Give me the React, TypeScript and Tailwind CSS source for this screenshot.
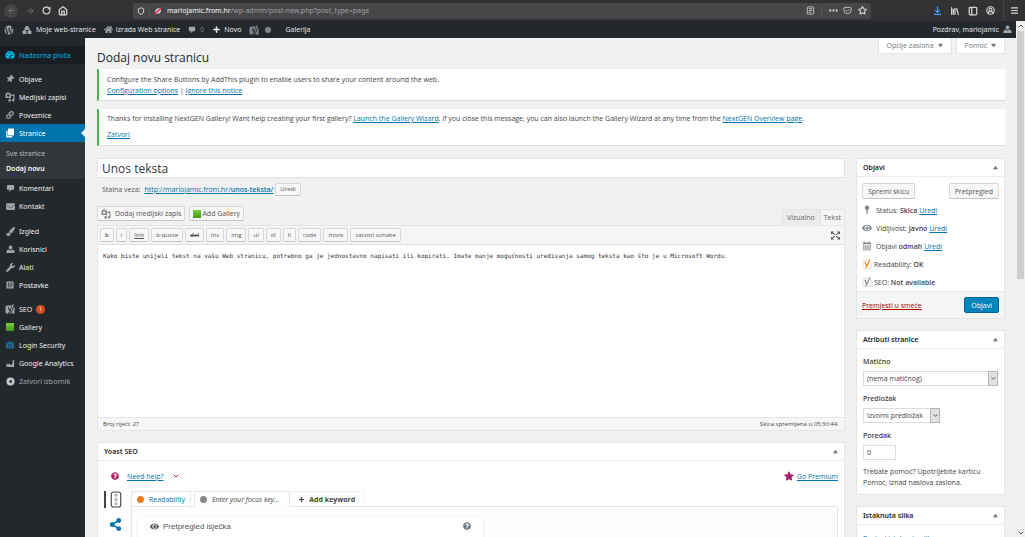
import type { ReactNode } from "react";
import {
  ArrowLeft,
  ArrowRight,
  ChevronDown,
  ChevronUp,
  CircleUserRound,
  Ellipsis,
  House,
  Library,
  Menu,
  PanelLeft,
  Plus,
  RotateCw,
  Shield,
  Star,
} from "lucide-react";
import {
  FaCamera,
  FaEnvelope,
  FaEye,
  FaHome,
  FaLink,
  FaPaintBrush,
  FaQuestionCircle,
  FaShareAlt,
  FaStar,
  FaThumbtack,
  FaWordpress,
  FaWrench,
} from "react-icons/fa";

interface SvgProps {
  className?: string;
}

const NetworkIcon = ({ className }: SvgProps) => (
  <svg viewBox="0 0 20 20" fill="currentColor" className={className}>
    <path d="M10 1l6 5.500h-1.600V10H5.600V6.500H4z M5 9l5 4.500H8.800V18H1.200v-4.500H0z M15 9l5 4.500h-1.200V18h-7.600v-4.500H10z" />
  </svg>
);

const CommentIcon = ({ className }: SvgProps) => (
  <svg viewBox="0 0 20 20" fill="currentColor" className={className}>
    <path d="M4 2h12a2 2 0 0 1 2 2v7a2 2 0 0 1-2 2h-4l-5 5v-5H4a2 2 0 0 1-2-2V4a2 2 0 0 1 2-2z" />
  </svg>
);

const UserIcon = ({ className }: SvgProps) => (
  <svg viewBox="0 0 20 20" fill="currentColor" className={className}>
    <path d="M10 1a4 4 0 0 1 4 4.500C14 8 12.200 10 10 10S6 8 6 5.500A4 4 0 0 1 10 1z" />
    <path d="M6 10l4 3 4-3c3 .5 5 2.500 5 5.500V18H1v-2.500C1 12.500 3 10.500 6 10z" />
  </svg>
);

const DownloadIcon = ({ className }: SvgProps) => (
  <svg viewBox="0 0 20 20" fill="none" stroke="currentColor" strokeWidth="2.600" className={className}>
    <path d="M10 1v13M4.500 9l5.500 5.500L15.500 9M2 18.500h16" />
  </svg>
);

const DashboardIcon = ({ className }: SvgProps) => (
  <svg viewBox="0 0 20 20" className={className}>
    <path
      fill="currentColor"
      d="M10 2a9 9 0 0 0-8 13.500c.5.900 1 1.500 1.500 1.500h13c.5 0 1-.6 1.500-1.500A9 9 0 0 0 10 2z"
    />
    <g fill="#191e23">
      <circle cx="4.500" cy="11" r="1.200" />
      <circle cx="6.500" cy="6.500" r="1.200" />
      <circle cx="10" cy="5" r="1.200" />
      <circle cx="15.500" cy="11" r="1.200" />
      <path d="M14 6l-2.500 8a1.600 1.600 0 1 1-2.600-1.200z" />
    </g>
  </svg>
);

const MediaIcon = ({ className }: SvgProps) => (
  <svg viewBox="0 0 20 20" className={className}>
    <path
      fill="currentColor"
      fillRule="evenodd"
      d="M1 3h2l1-2h4l1 2h3v9H1zM6.500 4.700a2.500 2.500 0 1 0 0 5 2.500 2.500 0 0 0 0-5z"
    />
    <path
      fill="currentColor"
      d="M13 5h6v11.500a2.600 2.600 0 1 1-2.200-2.500V8H13zM9.500 13h2.200v4a2.600 2.600 0 1 1-2.200-2.500z"
    />
  </svg>
);

const PagesIcon = ({ className }: SvgProps) => (
  <svg viewBox="0 0 20 20" fill="currentColor" className={className}>
    <path d="M7 1h10a1 1 0 0 1 1 1v12a1 1 0 0 1-1 1H7a1 1 0 0 1-1-1V2a1 1 0 0 1 1-1z" />
    <path d="M2.500 5H5v11h9.500v3h-11a1 1 0 0 1-1-1z" />
  </svg>
);

const SettingsIcon = ({ className }: SvgProps) => (
  <svg viewBox="0 0 20 20" className={className}>
    <rect x="1" y="1" width="18" height="18" rx="1" fill="currentColor" />
    <path
      d="M6 4v12M4 8h4M10 4v12M8.500 12h3M14.500 4v12M12.500 7h4"
      stroke="#23282d"
      strokeWidth="1.500"
    />
  </svg>
);

const YoastIcon = ({ className }: SvgProps) => (
  <svg viewBox="0 0 20 20" className={className}>
    <path fill="currentColor" d="M4 3h9.500L10 12 8 6.500H5.500L9 15c-.5 1.500-1 2-2.500 2v2H4a3 3 0 0 1-3-3V6a3 3 0 0 1 3-3z" />
    <path fill="currentColor" d="M14.800 1h3L11 19H7.500c2-.5 2.500-1 3-2.500zM18 5c.7.600 1 1.300 1 2.200V19h-6z" />
  </svg>
);

// outlined variant used in the publish box
const YoastBadge = ({ className }: SvgProps) => (
  <svg viewBox="0 0 20 20" fill="none" stroke="currentColor" className={className}>
    <path d="M13 3H3.500A1.500 1.500 0 0 0 2 4.500v12A2.500 2.500 0 0 0 4.500 19H18V6" strokeWidth="1" opacity="0.600" />
    <path d="M5.500 6l4 7.500M16 1l-6 13c-1 2-1.500 2.800-3.500 2.800" strokeWidth="2.400" />
  </svg>
);

const ChartIcon = ({ className }: SvgProps) => (
  <svg viewBox="0 0 20 20" fill="currentColor" className={className}>
    <path d="M1 18V9l3 3 3-2 3 3 3-1 2-5V2h3v16z" />
  </svg>
);

const CollapseIcon = ({ className }: SvgProps) => (
  <svg viewBox="0 0 20 20" className={className}>
    <circle cx="10" cy="10" r="9" fill="currentColor" />
    <path d="M12.500 5.500v9L6 10z" fill="#23282d" />
  </svg>
);

const PocketIcon = ({ className }: SvgProps) => (
  <svg viewBox="0 0 20 20" fill="none" stroke="currentColor" strokeWidth="1.800" className={className}>
    <path d="M3.500 3h13A1.500 1.500 0 0 1 18 4.500V9A8 8 0 0 1 2 9V4.500A1.500 1.500 0 0 1 3.500 3z" />
    <path d="M6 8l4 4 4-4" />
  </svg>
);

const ReaderIcon = ({ className }: SvgProps) => (
  <svg viewBox="0 0 20 20" fill="none" stroke="currentColor" strokeWidth="1.800" className={className}>
    <rect x="3" y="2" width="14" height="16" rx="2" />
    <path d="M6 6h8M6 10h8M6 14h5" />
  </svg>
);

const PermissionIcon = ({ className }: SvgProps) => (
  <svg viewBox="0 0 20 20" className={className}>
    <path d="M3 9l6-6h8v9l-5 5H3z" fill="#d7d7db" />
    <path d="M2 18L18 2" stroke="#e22850" strokeWidth="4" />
  </svg>
);

const PinIcon = ({ className }: SvgProps) => (
  <svg viewBox="0 0 20 20" fill="currentColor" className={className}>
    <path d="M10 1a4.500 4.500 0 0 1 1.500 8.700L11 19H9l-.5-9.300A4.500 4.500 0 0 1 10 1z" />
  </svg>
);

const CalendarIcon = ({ className }: SvgProps) => (
  <svg viewBox="0 0 20 20" fill="none" stroke="currentColor" className={className}>
    <path d="M2 4.500h16" strokeWidth="3" />
    <path d="M5.500 1v3M14.500 1v3" strokeWidth="2" />
    <path d="M2.700 5v13.300h14.600V5M6.300 7v11M10 7v11M13.700 7v11M2.700 10h14.600M2.700 14h14.600" strokeWidth="1.200" />
  </svg>
);

const ExpandIcon = ({ className }: SvgProps) => (
  <svg viewBox="0 0 20 20" className={className}>
    <path d="M3 4l5.500 4.500M17 4l-5.500 4.500M3 16l5.500-4.500M17 16l-5.500-4.500" stroke="currentColor" strokeWidth="2.400" />
    <path
      fill="currentColor"
      d="M0 1h7L0 7.500zM20 1h-7l7 6.500zM0 19h7l-7-6.500zM20 19h-7l7-6.500z"
    />
  </svg>
);

const TrafficIcon = ({ className }: SvgProps) => (
  <svg viewBox="0 0 12 18" className={className}>
    <rect x="1" y="1" width="10" height="16" rx="2.500" fill="#fff" stroke="#4b4450" strokeWidth="1.200" />
    <g fill="#b8b8b8">
      <circle cx="6" cy="4.500" r="1.800" />
      <circle cx="6" cy="9" r="1.800" />
      <circle cx="6" cy="13.500" r="1.800" />
    </g>
  </svg>
);

const GreenSquare = () => <span className="h-2 w-2 bg-gradient-to-b from-[#7ad03a] to-[#3c9a10]" />;

interface ButtonProps {
  children: ReactNode;
  className?: string;
}

const Button = ({ children, className = "" }: ButtonProps) => (
  <button
    type="button"
    className={`flex items-center justify-center rounded-xs border border-[#d6d6d6] border-b-[#c4c4c4] bg-[#f7f7f7] text-[#555] ${className}`}
  >
    {children}
  </button>
);

const Link = ({ children }: { children: ReactNode }) => (
  <a href="#" className="text-[#0073aa] underline">
    {children}
  </a>
);

const BrowserBar = () => (
  <div className="flex h-[21px] shrink-0 items-center bg-[#323234] font-['Noto_Sans',sans-serif] text-[#d7d7db]">
    <div className="flex w-[133px] shrink-0 items-center gap-[7px] pl-1">
      <button type="button" aria-label="Back" className="flex h-3.5 w-3.5 items-center justify-center rounded-full bg-[#444446] text-[#828284]">
        <ArrowLeft size={9} />
      </button>
      <button type="button" aria-label="Forward" className="text-[#77777a]">
        <ArrowRight size={10} />
      </button>
      <button type="button" aria-label="Reload">
        <RotateCw size={9} strokeWidth={3} />
      </button>
      <button type="button" aria-label="Home">
        <House size={10} strokeWidth={3} />
      </button>
    </div>
    <div className="flex h-4 grow items-center rounded-xs bg-[#474749] px-1">
      <Shield size={8} strokeWidth={3} className="mr-1" />
      <span className="mr-1 h-3 w-px bg-[#59595b]" />
      <PermissionIcon className="mr-[5px] h-2 w-2" />
      <div className="grow text-[7px] leading-4 text-[#a0a0a3]">
        <span className="text-[#f9f9fa]">mariojamic.from.hr</span>/wp-admin/post-new.php?post_type=page
      </div>
      <ReaderIcon className="mr-1.5 h-[9px] w-[9px]" />
      <span className="mr-1.5 h-3 w-px bg-[#59595b]" />
      <Ellipsis size={11} strokeWidth={3} className="mr-1" />
      <PocketIcon className="mr-1.5 h-[9px] w-[9px]" />
      <Star size={9} strokeWidth={3} />
    </div>
    <div className="flex w-[154px] shrink-0 items-center justify-end gap-2">
      <DownloadIcon className="h-[9px] w-[9px] text-[#45a1ff]" />
      <Library size={10} strokeWidth={3} />
      <PanelLeft size={10} strokeWidth={3} />
      <CircleUserRound size={9} strokeWidth={3} />
      <div className="flex h-[21px] items-center border-l border-[#444446] pr-1.5 pl-1.5">
        <Menu size={9} strokeWidth={3} />
      </div>
    </div>
  </div>
);

const AdminBar = () => (
  <div className="flex h-[17px] shrink-0 items-center bg-[#23282d] pr-1 pl-1 text-[7px] text-[#eee]">
    <FaWordpress size={10} className="mr-2 text-[#a0a5aa]" />
    <NetworkIcon className="mr-1 h-2.5 w-2.5 text-[#a0a5aa]" />
    <a href="#" className="mr-2">Moje web-stranice</a>
    <FaHome size={9} className="mr-[3px] text-[#a0a5aa]" />
    <a href="#" className="mr-2">Izrada Web stranice</a>
    <CommentIcon className="mr-1 h-2 w-2 text-[#a0a5aa]" />
    <span className="mr-2 text-[#82878c]">0</span>
    <Plus size={9} strokeWidth={4} className="mr-[3px]" />
    <a href="#" className="mr-2">Novo</a>
    <YoastIcon className="mr-1.5 h-2.5 w-2.5 text-[#82878c]" />
    <span className="mr-3.5 h-1.5 w-1.5 rounded-full bg-[#82878c]" />
    <a href="#" className="grow">Galerija</a>
    <a href="#" className="mr-1">Pozdrav, mariojamic</a>
    <UserIcon className="h-[9px] w-[9px] text-[#a0a5aa]" />
  </div>
);

interface MenuItemProps {
  icon: ReactNode;
  label: string;
  badge?: string;
  tone?: "normal" | "hover" | "current" | "muted";
}

const itemTones = {
  normal: "text-[#eee]",
  hover: "bg-[#191e23] text-[#00b9eb]",
  current: "bg-[#0073aa] text-white",
  muted: "text-[#a0a5aa]",
};

const iconTones = {
  normal: "text-[#a0a5aa]",
  hover: "text-[#00b9eb]",
  current: "text-white",
  muted: "text-[#c5c8ca]",
};

const MenuItem = ({ icon, label, badge, tone = "normal" }: MenuItemProps) => (
  <li>
    <a href="#" className={`flex h-[18px] items-center pl-[5px] ${itemTones[tone]}`}>
      <span className={`mr-1 flex w-2.5 justify-center ${iconTones[tone]}`}>{icon}</span>
      {label}
      {badge && (
        <span className="ml-1 flex h-[9px] w-[9px] items-center justify-center rounded-full bg-[#d54e21] text-[5px] text-white">
          {badge}
        </span>
      )}
      {tone === "current" && (
        <span className="ml-auto border-y-4 border-r-4 border-y-transparent border-r-[#f1f1f1]" />
      )}
    </a>
  </li>
);

const Sidebar = () => (
  <nav className="w-[85px] shrink-0 bg-[#23282d] pt-2 font-['Noto_Sans',sans-serif] text-[7px]">
    <ul>
      <MenuItem icon={<DashboardIcon className="h-2.5 w-2.5" />} label="Nadzorna ploča" tone="hover" />
    </ul>
    <ul className="mt-1.5">
      <MenuItem icon={<FaThumbtack size={8} className="rotate-45" />} label="Objave" />
      <MenuItem icon={<MediaIcon className="h-2.5 w-2.5" />} label="Medijski zapisi" />
      <MenuItem icon={<FaLink size={8} />} label="Poveznice" />
      <MenuItem icon={<PagesIcon className="h-2.5 w-2.5" />} label="Stranice" tone="current" />
      <li>
        <ul className="bg-[#32373c] pt-1 pb-[3px] pl-1.5 leading-[15px]">
          <li><a href="#" className="text-[#b4b9be]">Sve stranice</a></li>
          <li><a href="#" className="font-semibold text-white">Dodaj novu</a></li>
        </ul>
      </li>
      <MenuItem icon={<CommentIcon className="h-[9px] w-[9px]" />} label="Komentari" />
      <MenuItem icon={<FaEnvelope size={9} />} label="Kontakt" />
    </ul>
    <ul className="mt-[7px]">
      <MenuItem icon={<FaPaintBrush size={9} />} label="Izgled" />
      <MenuItem icon={<UserIcon className="h-[9px] w-[9px]" />} label="Korisnici" />
      <MenuItem icon={<FaWrench size={9} />} label="Alati" />
      <MenuItem icon={<SettingsIcon className="h-2 w-2" />} label="Postavke" />
    </ul>
    <ul className="mt-1.5">
      <MenuItem icon={<YoastIcon className="h-2.5 w-2.5" />} label="SEO" badge="1" />
      <MenuItem icon={<GreenSquare />} label="Gallery" />
      <MenuItem icon={<FaCamera size={8} className="text-[#1c6a94]" />} label="Login Security" />
      <MenuItem icon={<ChartIcon className="h-[9px] w-[9px]" />} label="Google Analytics" />
      <MenuItem icon={<CollapseIcon className="h-[9px] w-[9px]" />} label="Zatvori izbornik" tone="muted" />
    </ul>
  </nav>
);

const Notice = ({ children }: { children: ReactNode }) => (
  <div className="mb-2 border-b border-l-2 border-b-[#dcdcdc] border-l-[#46b450] bg-white px-2">
    {children}
  </div>
);

const quickTags = [
  { label: "b", style: "font-semibold" },
  { label: "i", style: "italic" },
  { label: "link", style: "underline" },
  { label: "b-quote", style: "" },
  { label: "del", style: "line-through font-semibold" },
  { label: "ins", style: "" },
  { label: "img", style: "" },
  { label: "ul", style: "" },
  { label: "ol", style: "" },
  { label: "li", style: "" },
  { label: "code", style: "" },
  { label: "more", style: "" },
  { label: "zatvori oznake", style: "" },
];

const content =
  "Kako biste unijeli tekst na vašu Web stranicu, potrebno ga je jednostavno napisati ili kopirati. Imate manje mogućnosti uređivanja samog teksta kao što je u Microsoft Wordu.";

const Editor = () => (
  <section>
    <input
      aria-label="Naslov"
      defaultValue="Unos teksta"
      className="block h-5 w-full border border-[#e2e2e2] bg-white px-1 text-[12px] text-[#32373c]"
    />
    <div className="mt-1 flex h-[14px] items-center pl-[5px]">
      <span className="mr-1 text-[#555]">Stalna veza:</span>
      <a href="#" className="mr-0.5 text-[#0073aa] underline">
        http://mariojamic.from.hr/<span className="font-semibold">unos-teksta/</span>
      </a>
      <Button className="h-[13px] px-1 text-[6px]">Uredi</Button>
    </div>
    <div className="mt-2.5 flex items-start justify-between">
      <div className="mb-1 flex gap-1">
        <Button className="h-[15px] gap-1 px-[3px]">
          <MediaIcon className="h-2.5 w-2.5 text-[#82878c]" />
          Dodaj medijski zapis
        </Button>
        <Button className="h-[15px] gap-px px-[3px]">
          <GreenSquare />
          Add Gallery
        </Button>
      </div>
      <div className="mt-[3px] flex text-[#666]">
        <button type="button" className="h-4 border border-b-0 border-[#e5e5e5] bg-[#ebebeb] px-1">Vizualno</button>
        <button type="button" className="h-4 border border-b-0 border-[#e5e5e5] bg-[#f5f5f5] px-[3px]">Tekst</button>
      </div>
    </div>
    <div className="border border-[#e5e5e5]">
      <div className="flex h-[19px] items-center gap-0.5 border-b border-[#dedede] bg-[#f5f5f5] px-0.5">
        {quickTags.map((tag) => (
          <Button key={tag.label} className={`h-3.5 px-1 text-[6px] ${tag.style}`}>
            {tag.label}
          </Button>
        ))}
        <button type="button" aria-label="Cijeli zaslon" className="mr-0.5 ml-auto text-[#555]">
          <ExpandIcon className="h-[9px] w-[9px]" />
        </button>
      </div>
      <textarea
        aria-label="Sadržaj"
        defaultValue={content}
        className="block h-[172px] w-full resize-none bg-white px-[5px] py-1.5 font-['DejaVu_Sans_Mono',monospace] text-[6px] leading-[9px] text-[#333]"
      />
      <div className="flex h-[13px] items-center justify-between border-t border-[#e5e5e5] bg-[#f7f7f7] px-[5px] text-[6px]">
        <span>Broj riječi: 27</span>
        <span>Skica spremljena u 05:36:44.</span>
      </div>
    </div>
  </section>
);

interface BoxProps {
  title: string;
  children: ReactNode;
}

const Box = ({ title, children }: BoxProps) => (
  <section className="border border-[#e5e5e5] bg-white">
    <div className="flex h-[18px] items-center justify-between border-b border-[#eee] px-1.5">
      <h2 className="font-['Noto_Sans',sans-serif] text-[7px] font-semibold text-[#23282d]">{title}</h2>
      <button type="button" aria-label={`Sažmi: ${title}`} className="flex">
        <svg viewBox="0 0 6 6" className="h-[5px] w-[5px]"><path d="M3 1l3 4H0z" fill="#72777c" /></svg>
      </button>
    </div>
    {children}
  </section>
);

const YoastBox = () => (
  <Box title="Yoast SEO">
    <div className="flex h-[30px] items-center pr-1.5 pl-[13px]">
      <FaQuestionCircle size={8} className="mr-2 text-[#a4286a]" />
      <Link>Need help?</Link>
      <ChevronDown size={8} strokeWidth={3} className="ml-2 text-[#a4286a]" />
      <FaStar size={10} className="mr-[3px] ml-auto text-[#a4286a]" />
      <Link>Go Premium</Link>
    </div>
    <div className="flex px-1.5">
      <div className="flex w-[27px] shrink-0 flex-col">
        <div className="flex h-[17px] border-l-2 border-[#444] pl-1">
          <TrafficIcon className="h-[17px] w-3" />
        </div>
        <FaShareAlt size={13} className="mt-2.5 ml-[5px] text-[#0073aa]" />
      </div>
      <div className="grow">
        <div className="flex h-4 items-stretch">
          <button type="button" className="flex items-center border border-[#e5e5e5] px-[5px] text-[#0073aa]">
            <span className="mr-[5px] h-[7px] w-[7px] rounded-full bg-[#ee7c1b]" />
            Readability
          </button>
          <span className="w-[3px] border-b border-[#e5e5e5]" />
          <button type="button" className="flex items-center border border-b-0 border-[#e5e5e5] pr-2.5 pl-[5px] text-[#444] italic">
            <span className="mr-[5px] h-[7px] w-[7px] rounded-full bg-[#888]" />
            Enter your focus key...
          </button>
          <button type="button" className="flex items-center border border-l-0 border-t-[#f3f3f3] border-r-[#f3f3f3] border-b-[#e5e5e5] px-2 font-bold text-[#444]">
            <Plus size={7} strokeWidth={4} className="mr-1" />
            Add keyword
          </button>
          <span className="grow border-b border-[#e5e5e5]" />
        </div>
        <div className="border-x border-[#e5e5e5] bg-[#fdfdfd] px-1.5 pt-2.5">
          <div className="flex h-14 w-[345px] items-start bg-white px-3 pt-[5px] shadow-sm">
            <FaEye size={9} className="mr-1 text-[#555]" />
            <h3 className="grow font-['Liberation_Sans',sans-serif] text-[8px] leading-[10px] text-[#555]">Pretpregled isječka</h3>
            <FaQuestionCircle size={8} className="text-[#6c7781]" />
          </div>
        </div>
      </div>
    </div>
  </Box>
);

interface StatusRowProps {
  icon: ReactNode;
  label: string;
  value: string;
  editable?: boolean;
}

const StatusRow = ({ icon, label, value, editable }: StatusRowProps) => (
  <div className={`flex h-[18px] items-center ${editable ? "gap-1" : "gap-0.5"}`}>
    <span className="flex w-2.5 justify-center text-[#82878c]">{icon}</span>
    <p>
      {label} <b className="font-semibold">{value}</b> {editable && <Link>Uredi</Link>}
    </p>
  </div>
);

const PublishBox = () => (
  <Box title="Objavi">
    <div className="px-[5px] pt-1.5">
      <div className="mb-0.5 flex justify-between">
        <Button className="h-4 px-[5px]">Spremi skicu</Button>
        <Button className="h-4 px-[5px]">Pretpregled</Button>
      </div>
      <StatusRow icon={<PinIcon className="h-2.5 w-2.5" />} label="Status:" value="Skica" editable />
      <StatusRow icon={<FaEye size={10} />} label="Vidljivost:" value="Javno" editable />
      <StatusRow icon={<CalendarIcon className="h-2.5 w-2.5" />} label="Objavi" value="odmah" editable />
      <StatusRow icon={<YoastBadge className="h-2.5 w-2.5 text-[#ee7c1b]" />} label="Readability:" value="OK" />
      <StatusRow icon={<YoastBadge className="h-2.5 w-2.5" />} label="SEO:" value="Not available" />
    </div>
    <div className="flex h-[27px] items-center justify-between border-t border-[#e5e5e5] bg-[#f5f5f5] px-[5px]">
      <a href="#" className="text-[#a00] underline">Premjesti u smeće</a>
      <button type="button" className="h-4 rounded-xs border border-[#006799] bg-[#0085ba] px-1.5 text-white">Objavi</button>
    </div>
  </Box>
);

interface SelectProps {
  id: string;
  label: string;
  option: string;
  className: string;
}

const Select = ({ id, label, option, className }: SelectProps) => (
  <>
    <label htmlFor={id} className="mb-1 block leading-[10px] font-semibold">{label}</label>
    <div className={`relative mb-2 ${className}`}>
      <select id={id} className="block h-[15px] w-full appearance-none border border-[#ddd] bg-white pl-[3px]">
        <option>{option}</option>
      </select>
      <span className="pointer-events-none absolute inset-y-0 right-0 flex w-2.5 items-center justify-center border border-[#b5b5b5] bg-[#e1e1e1]">
        <ChevronDown size={7} strokeWidth={3} />
      </span>
    </div>
  </>
);

const AttributesBox = () => (
  <Box title="Atributi stranice">
    <div className="px-1.5 pt-2 pb-1.5">
      <Select id="parent" label="Matično" option="(nema matičnog)" className="w-full" />
      <Select id="template" label="Predložak" option="Izvorni predložak" className="w-[77px]" />
      <label htmlFor="order" className="mb-1 block leading-[10px] font-semibold">Poredak</label>
      <input id="order" defaultValue="0" className="block h-[15px] w-[33px] border border-[#ddd] bg-white px-[3px]" />
      <p className="mt-1.5">Trebate pomoć? Upotrijebite karticu Pomoć, iznad naslova zaslona.</p>
    </div>
  </Box>
);

const Scrollbar = () => (
  <div className="flex w-[9px] shrink-0 flex-col items-center bg-[#f0f0f0] text-[#505050]">
    <ChevronUp size={8} strokeWidth={3} className="my-px shrink-0" />
    <div className="h-[48%] w-[7px] bg-[#cdcdcd]" />
    <ChevronDown size={8} strokeWidth={3} className="mt-auto shrink-0" />
  </div>
);

const ScreenTab = ({ children }: { children: ReactNode }) => (
  <button type="button" className="flex h-4 items-center gap-1 border border-t-0 border-[#e5e5e5] bg-white px-2">
    {children}
    <svg viewBox="0 0 6 6" className="h-[5px] w-[5px]"><path d="M0 1h6L3 5.500z" fill="#72777c" /></svg>
  </button>
);

export default function App() {
  return (
    <div className="flex h-screen flex-col overflow-hidden bg-[#f1f1f1] font-['Open_Sans',sans-serif] text-[7px] leading-[11px] text-[#444]">
      <BrowserBar />
      <div className="flex min-h-0 grow">
        <div className="flex min-w-0 grow flex-col">
          <AdminBar />
          <div className="flex min-h-0 grow">
            <Sidebar />
            <main className="min-w-0 grow overflow-hidden pr-[11px] pl-3">
              <div className="flex h-[31px] justify-between">
                <h1 className="pt-3 text-[12px] leading-4 text-[#23282d]">Dodaj novu stranicu</h1>
                <div className="flex items-start gap-1 text-[#72777c]">
                  <ScreenTab>Opcije zaslona</ScreenTab>
                  <ScreenTab>Pomoć</ScreenTab>
                </div>
              </div>
              <Notice>
                <p className="pt-[5px] pb-1">
                  Configure the Share Buttons by AddThis plugin to enable users to share your content around the web.
                  <br />
                  <Link>Configuration options</Link> | <Link>Ignore this notice</Link>
                </p>
              </Notice>
              <Notice>
                <p className="pt-1">
                  Thanks for installing NextGEN Gallery! Want help creating your first gallery? <Link>Launch the Gallery Wizard</Link>. If you close this message, you can also launch the Gallery Wizard at any time from the <Link>NextGEN Overview page</Link>.
                </p>
                <p className="pt-[5px] pb-[5px]"><Link>Zatvori</Link></p>
              </Notice>
              <div className="mt-3 flex gap-[11px]">
                <div className="flex min-w-0 grow flex-col gap-[11px]">
                  <Editor />
                  <YoastBox />
                </div>
                <div className="flex w-[149px] shrink-0 flex-col gap-[11px]">
                  <PublishBox />
                  <AttributesBox />
                  <Box title="Istaknuta slika">
                    <p className="px-1.5 pt-2"><Link>Postavi istaknutu sliku</Link></p>
                  </Box>
                </div>
              </div>
            </main>
          </div>
        </div>
        <Scrollbar />
      </div>
    </div>
  );
}
